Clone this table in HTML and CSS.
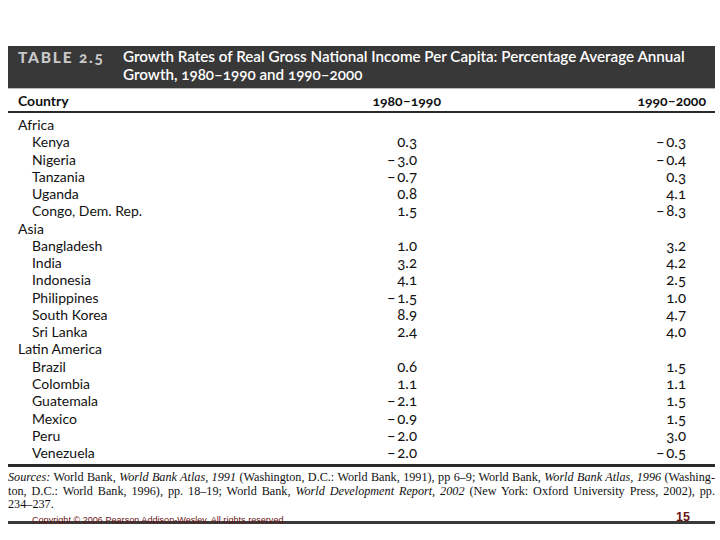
FILE: index.html
```html
<!DOCTYPE html>
<html lang="en">
<head>
<meta charset="utf-8">
<title>Table 2.5</title>
<link rel="stylesheet" href="styles.css">
</head>
<body>
<div class="page">
  <div class="banner">
    <div class="label">TABLE 2.5</div>
    <div class="title">Growth Rates of Real Gross National Income Per Capita: Percentage Average Annual Growth, 1980–1990 and 1990–2000</div>
  </div>
  <div class="row head">
    <div class="name">Country</div>
    <div class="v1">1980–1990</div>
    <div class="v2">1990–2000</div>
  </div>
  <div class="body">
    <div class="row"><div class="name">Africa</div><div class="v1"></div><div class="v2"></div></div>
    <div class="row"><div class="name sub">Kenya</div><div class="v1">0.3</div><div class="v2"><span class="m">−</span>0.3</div></div>
    <div class="row"><div class="name sub">Nigeria</div><div class="v1"><span class="m">−</span>3.0</div><div class="v2"><span class="m">−</span>0.4</div></div>
    <div class="row"><div class="name sub">Tanzania</div><div class="v1"><span class="m">−</span>0.7</div><div class="v2">0.3</div></div>
    <div class="row"><div class="name sub">Uganda</div><div class="v1">0.8</div><div class="v2">4.1</div></div>
    <div class="row"><div class="name sub">Congo, Dem. Rep.</div><div class="v1">1.5</div><div class="v2"><span class="m">−</span>8.3</div></div>
    <div class="row"><div class="name">Asia</div><div class="v1"></div><div class="v2"></div></div>
    <div class="row"><div class="name sub">Bangladesh</div><div class="v1">1.0</div><div class="v2">3.2</div></div>
    <div class="row"><div class="name sub">India</div><div class="v1">3.2</div><div class="v2">4.2</div></div>
    <div class="row"><div class="name sub">Indonesia</div><div class="v1">4.1</div><div class="v2">2.5</div></div>
    <div class="row"><div class="name sub">Philippines</div><div class="v1"><span class="m">−</span>1.5</div><div class="v2">1.0</div></div>
    <div class="row"><div class="name sub">South Korea</div><div class="v1">8.9</div><div class="v2">4.7</div></div>
    <div class="row"><div class="name sub">Sri Lanka</div><div class="v1">2.4</div><div class="v2">4.0</div></div>
    <div class="row"><div class="name">Latin America</div><div class="v1"></div><div class="v2"></div></div>
    <div class="row"><div class="name sub">Brazil</div><div class="v1">0.6</div><div class="v2">1.5</div></div>
    <div class="row"><div class="name sub">Colombia</div><div class="v1">1.1</div><div class="v2">1.1</div></div>
    <div class="row"><div class="name sub">Guatemala</div><div class="v1"><span class="m">−</span>2.1</div><div class="v2">1.5</div></div>
    <div class="row"><div class="name sub">Mexico</div><div class="v1"><span class="m">−</span>0.9</div><div class="v2">1.5</div></div>
    <div class="row"><div class="name sub">Peru</div><div class="v1"><span class="m">−</span>2.0</div><div class="v2">3.0</div></div>
    <div class="row"><div class="name sub">Venezuela</div><div class="v1"><span class="m">−</span>2.0</div><div class="v2"><span class="m">−</span>0.5</div></div>
  </div>
  <div class="sources">
    <div class="line just"><i>Sources:</i> World Bank, <i>World Bank Atlas, 1991</i> (Washington, D.C.: World Bank, 1991), pp 6–9; World Bank, <i>World Bank Atlas, 1996</i> (Washing-</div>
    <div class="line just">ton, D.C.: World Bank, 1996), pp. 18–19; World Bank, <i>World Development Report, 2002</i> (New York: Oxford University Press, 2002), pp.</div>
    <div class="line">234–237.</div>
  </div>
  <div class="footer">
    <div class="copy">Copyright © 2006 Pearson Addison-Wesley. All rights reserved.</div>
    <div class="num">15</div>
  </div>
</div>
</body>
</html>
```
FILE: styles.css
```css
html, body {
  margin: 0;
  padding: 0;
  background: #ffffff;
}
.page {
  width: 707px;
  margin: 0 0 0 8px;
  padding-top: 46px;
  font-family: Lato, "Open Sans", sans-serif;
  color: #111;
}
.banner {
  background: #383838;
  height: 43px;
  display: flex;
  align-items: flex-start;
  padding: 1px 0 0 10px;
  box-sizing: border-box;
  border-bottom: 1px solid #b8b8b8;
}
.label {
  width: 105px;
  flex: none;
  color: #c9c9c9;
  font-weight: 900;
  font-size: 15.5px;
  letter-spacing: 1.8px;
  line-height: 18px;
  font-variant-numeric: oldstyle-nums;
  padding-top: 1px;
}
.title {
  color: #ffffff;
  font-size: 15.2px;
  font-weight: 600;
  line-height: 18px;
  font-variant-numeric: oldstyle-nums;
}
.row {
  display: grid;
  grid-template-columns: 352px 81px 265px;
  font-size: 14px;
  line-height: 17.27px;
  font-variant-numeric: oldstyle-nums;
}
.row.head {
  font-weight: 700;
  padding: 3px 0 2px;
  line-height: 17px;
  border-bottom: 2px solid #2a2a2a;
}
.name {
  padding-left: 10px;
}
.name.sub {
  padding-left: 24px;
}
.v1, .v2 {
  text-align: right;
}
.body .v1, .body .v2 {
  font-size: 15px;
}
.body .v1 {
  padding-right: 24px;
}
.body .v2 {
  padding-right: 20px;
}
.m {
  margin-right: 2px;
}
.body {
  padding: 3px 0 3px;
  border-bottom: 3px solid #2a2a2a;
}
.sources {
  padding-top: 4px;
  font-family: "Liberation Serif", serif;
  font-size: 12.2px;
  line-height: 13.5px;
  color: #111;
}
.line {
  white-space: nowrap;
}
.line.just {
  text-align: justify;
  text-align-last: justify;
}
.footer {
  position: relative;
  margin-top: 9px;
  height: 3px;
  background: #3a3a3a;
}
.copy {
  position: absolute;
  left: 24px;
  top: -6px;
  font-family: "Liberation Sans", Arial, sans-serif;
  font-size: 9.1px;
  line-height: 10px;
  color: #6a1616;
  white-space: nowrap;
}
.num {
  position: absolute;
  left: 668px;
  top: -10px;
  font-family: "Liberation Sans", Arial, sans-serif;
  font-size: 12.5px;
  font-weight: 700;
  line-height: 13px;
  color: #6a1616;
}
```
